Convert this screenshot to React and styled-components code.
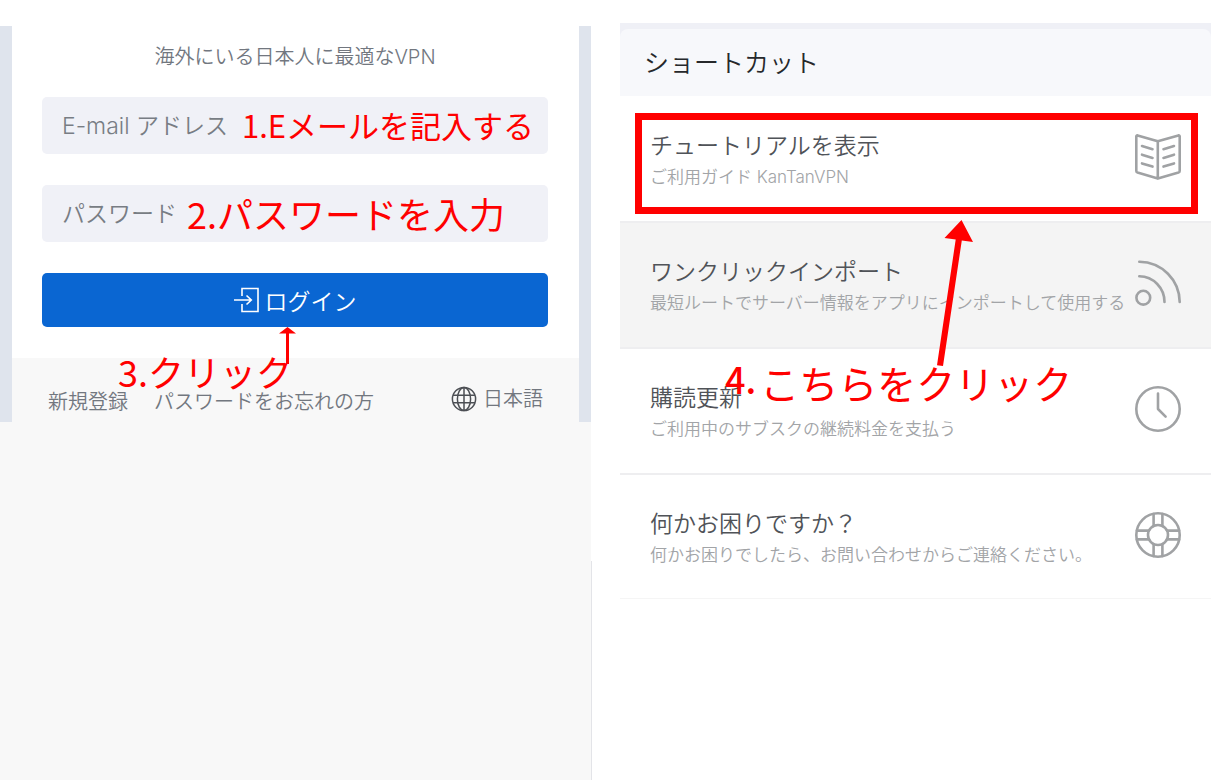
import React from "react";
import styled, { createGlobalStyle } from "styled-components";

const GlobalStyle = createGlobalStyle`
  *, *::before, *::after { box-sizing: border-box; }
  body {
    margin: 0;
    background: #ffffff;
    font-family: Inter, "Noto Sans CJK JP", sans-serif;
    font-weight: 350;
  }
  a { color: inherit; text-decoration: none; }
`;

const Page = styled.div`
  display: grid;
  grid-template-columns: minmax(0, 1fr) minmax(0, 1fr);
  gap: 29px;
  min-height: 100vh;
  padding-right: 8px;
`;

const LoginColumn = styled.section`
  display: flex;
  flex-direction: column;
  padding-top: 26px;
`;

const LoginFrame = styled.div`
  position: relative;
  border: solid #dfe4ed;
  border-width: 0 12px;
`;

const LoginForm = styled.form`
  display: flex;
  flex-direction: column;
  gap: 31px;
  padding: 0 31px 31px 30px;
`;

const Tagline = styled.p`
  margin: 0 0 -22px;
  color: #72777f;
  font-size: 20px;
  line-height: 62px;
  text-align: center;
`;

const Field = styled.div`
  position: relative;
`;

const TextInput = styled.input`
  display: block;
  width: 100%;
  height: 57px;
  padding: 0 20px;
  border: 0;
  border-radius: 5px;
  background: #f0f1f7;
  color: #4b4f57;
  font: inherit;
  font-size: 23px;
  &::placeholder { color: #787d84; opacity: 1; }
`;

const LoginButton = styled.button`
  display: flex;
  align-items: center;
  justify-content: center;
  gap: 5px;
  height: 54px;
  padding: 0 0 1px;
  border: 0;
  border-radius: 5px;
  background: #0a66d2;
  color: #ffffff;
  font: inherit;
  font-size: 23px;
`;

const LoginFooter = styled.footer`
  display: flex;
  justify-content: space-between;
  align-items: flex-start;
  height: 64px;
  padding: 28px 36px 0;
  background: #f8f8f8;
  color: #72777f;
  font-size: 20px;
`;

const FooterLinks = styled.nav`
  display: flex;
  gap: 26px;
  line-height: 32px;
  white-space: nowrap;
`;

const Language = styled.label`
  display: flex;
  align-items: center;
  gap: 6px;
  height: 26px;
`;

const LanguageSelect = styled.select`
  appearance: none;
  padding: 0;
  border: 0;
  background: transparent;
  color: inherit;
  font: inherit;
`;

const Backdrop = styled.div`
  flex: ${(p) => (p.$grow ? "1" : "0 0 139px")};
  margin-right: ${(p) => (p.$grow ? "-1px" : "0")};
  border-right: ${(p) => (p.$grow ? "1px solid #e3e4e8" : "0")};
  background: #f8f8f8;
`;

const Note = styled.div`
  position: absolute;
  left: ${(p) => p.$left}px;
  top: ${(p) => p.$top}px;
  display: flex;
  gap: 4px;
  color: #ff0000;
  font-family: "Noto Sans CJK JP", sans-serif;
  font-size: ${(p) => p.$size}px;
  font-weight: 400;
  line-height: 40px;
  white-space: nowrap;
  pointer-events: none;
`;

const NoteNumber = styled.span`
  font-size: 36px;
  font-weight: 500;
  line-height: 32px;
`;

const Arrow = styled.svg`
  position: absolute;
  left: ${(p) => p.$left}px;
  top: ${(p) => p.$top}px;
  fill: #ff0000;
  pointer-events: none;
`;

const ShortcutColumn = styled.section`
  padding-top: 23px;
`;

const ShortcutTop = styled.div`
  padding-top: 6px;
  background: #eff0f6;
`;

const ShortcutTitle = styled.h2`
  margin: 0;
  padding: 1px 24px 0;
  border-radius: 8px 8px 0 0;
  background: #f7f8fb;
  color: #26282b;
  font-size: 25px;
  font-weight: inherit;
  line-height: 66px;
`;

const ShortcutList = styled.div`
  position: relative;
  padding-top: 1px;
`;

const Row = styled.a`
  position: relative;
  display: flex;
  justify-content: space-between;
  align-items: flex-start;
  height: ${(p) => (p.$last ? 124 : 126)}px;
  padding: 34px 30px 0;
  border-bottom: ${(p) => (p.$last ? "1px solid #f5f5f5" : "2px solid #eeeef0")};
  background: ${(p) => (p.$active ? "#f4f4f4" : "#ffffff")};
`;

const RowText = styled.div`
  display: flex;
  flex-direction: column;
  line-height: 31px;
  white-space: nowrap;
`;

const RowTitle = styled.span`
  color: #505358;
  font-size: 23px;
`;

const RowDetail = styled.span`
  color: #a2a4a7;
  font-size: 17px;
`;

const RowIcon = styled.svg`
  flex: none;
  width: 46px;
  height: 46px;
  margin: 3px 0 0 -10px;
  fill: none;
  stroke: #a0a2a4;
  stroke-width: 2.6;
  stroke-linecap: round;
  stroke-linejoin: round;
`;

const Highlight = styled.div`
  position: absolute;
  inset: 16px 13px 7px 15px;
  border: 7px solid #ff0000;
`;

const LoginIcon = () => (
  <svg width="26" height="26" viewBox="0 0 26 26" fill="none" stroke="currentColor" strokeWidth="1.6" aria-hidden="true">
    <path d="M8 9V1.500h16v23H8V17M0 13h17M12.500 8.500L17.300 13l-4.800 4.500" />
  </svg>
);

const GlobeIcon = () => (
  <svg width="26" height="26" viewBox="0 0 26 26" fill="none" stroke="#4c4f54" strokeWidth="1.5" aria-hidden="true">
    <circle cx="13" cy="13" r="11.600" />
    <ellipse cx="13" cy="13" rx="6.600" ry="11.600" />
    <path d="M13 1.300v23.400M2 9.200h22M2 16.800h22" />
  </svg>
);

const icons = {
  book: (
    <>
      <path d="M22.800 7.300L2.600 1.400Q1.300 1.200 1.300 2.600V37q0 1.200 1.200 1.600L22.800 44.600l20.700-6Q44.700 38.200 44.700 37V2.600Q44.700 1.200 43.400 1.400L22.800 7.300V44.600" />
      <path d="M7 12l10.500 3.200M7 20.700l10.500 3.200M7 29.400l10.500 3.200M39 12l-10.500 3.200M39 20.700l-10.500 3.200M39 29.400l-10.500 3.200" />
    </>
  ),
  feed: (
    <>
      <path d="M4.300 1.700C27 2 44.500 20 44.700 42M4.300 16.300C18.500 16.500 29.500 28 29.500 42" />
      <circle cx="8.300" cy="37.700" r="6.900" />
    </>
  ),
  clock: (
    <>
      <circle cx="23" cy="23" r="21.700" />
      <path d="M23 7.500V23l7.600 7.600" />
    </>
  ),
  support: (
    <>
      <circle cx="23" cy="23" r="21.700" />
      <circle cx="23" cy="23" r="10" />
      <path d="M18.600 2v12M27.400 2v12M18.600 32v12M27.400 32v12M2 18.600h12M2 27.400h12M32 18.600h12M32 27.400h12" />
    </>
  ),
};

const shortcuts = [
  { icon: "book", title: "チュートリアルを表示", detail: "ご利用ガイド KanTanVPN", highlighted: true },
  { icon: "feed", title: "ワンクリックインポート", detail: "最短ルートでサーバー情報をアプリにインポートして使用する", active: true },
  { icon: "clock", title: "購読更新", detail: "ご利用中のサブスクの継続料金を支払う" },
  { icon: "support", title: "何かお困りですか？", detail: "何かお困りでしたら、お問い合わせからご連絡ください。" },
];

export default function App() {
  return (
    <>
      <GlobalStyle />
      <Page lang="ja">
        <LoginColumn>
          <LoginFrame>
            <LoginForm onSubmit={(e) => e.preventDefault()}>
              <Tagline>海外にいる日本人に最適なVPN</Tagline>
              <Field>
                <TextInput type="email" aria-label="E-mail アドレス" placeholder="E-mail アドレス" />
                <Note $left={200} $top={8} $size={31}>1.Eメールを記入する</Note>
              </Field>
              <Field>
                <TextInput type="password" aria-label="パスワード" placeholder="パスワード" />
                <Note $left={145} $top={8} $size={36}>2.パスワードを入力</Note>
              </Field>
              <LoginButton type="submit">
                <LoginIcon />
                ログイン
              </LoginButton>
            </LoginForm>
            <LoginFooter>
              <FooterLinks>
                <a href="#register">新規登録</a>
                <a href="#forgot">パスワードをお忘れの方</a>
              </FooterLinks>
              <Language>
                <GlobeIcon />
                <LanguageSelect aria-label="日本語">
                  <option>日本語</option>
                </LanguageSelect>
              </Language>
            </LoginFooter>
            <Arrow $left={267} $top={301} width="17" height="37" viewBox="0 0 17 37">
              <path d="M8.500 0L17 6.500H10V37H7V6.500H0z" />
            </Arrow>
            <Note $left={106} $top={325} $size={36}>3.クリック</Note>
          </LoginFrame>
          <Backdrop />
          <Backdrop $grow />
        </LoginColumn>

        <ShortcutColumn>
          <ShortcutTop>
            <ShortcutTitle>ショートカット</ShortcutTitle>
          </ShortcutTop>
          <ShortcutList>
            {shortcuts.map((s, i) => (
              <Row key={s.icon} href={`#${s.icon}`} $active={s.active} $last={i === shortcuts.length - 1}>
                <RowText>
                  <RowTitle>{s.title}</RowTitle>
                  <RowDetail>{s.detail}</RowDetail>
                </RowText>
                <RowIcon viewBox="0 0 46 46" aria-hidden="true">{icons[s.icon]}</RowIcon>
                {s.highlighted && <Highlight />}
              </Row>
            ))}
            <Arrow $left={315} $top={124} width="40" height="148" viewBox="0 0 40 148">
              <path d="M26.500 0L38 22L26.800 20.500L8 146L2 145.200L20.700 19.600L9.500 18z" />
            </Arrow>
            <Note $left={105} $top={266} $size={39}>
              <NoteNumber>4.</NoteNumber>
              こちらをクリック
            </Note>
          </ShortcutList>
        </ShortcutColumn>
      </Page>
    </>
  );
}
